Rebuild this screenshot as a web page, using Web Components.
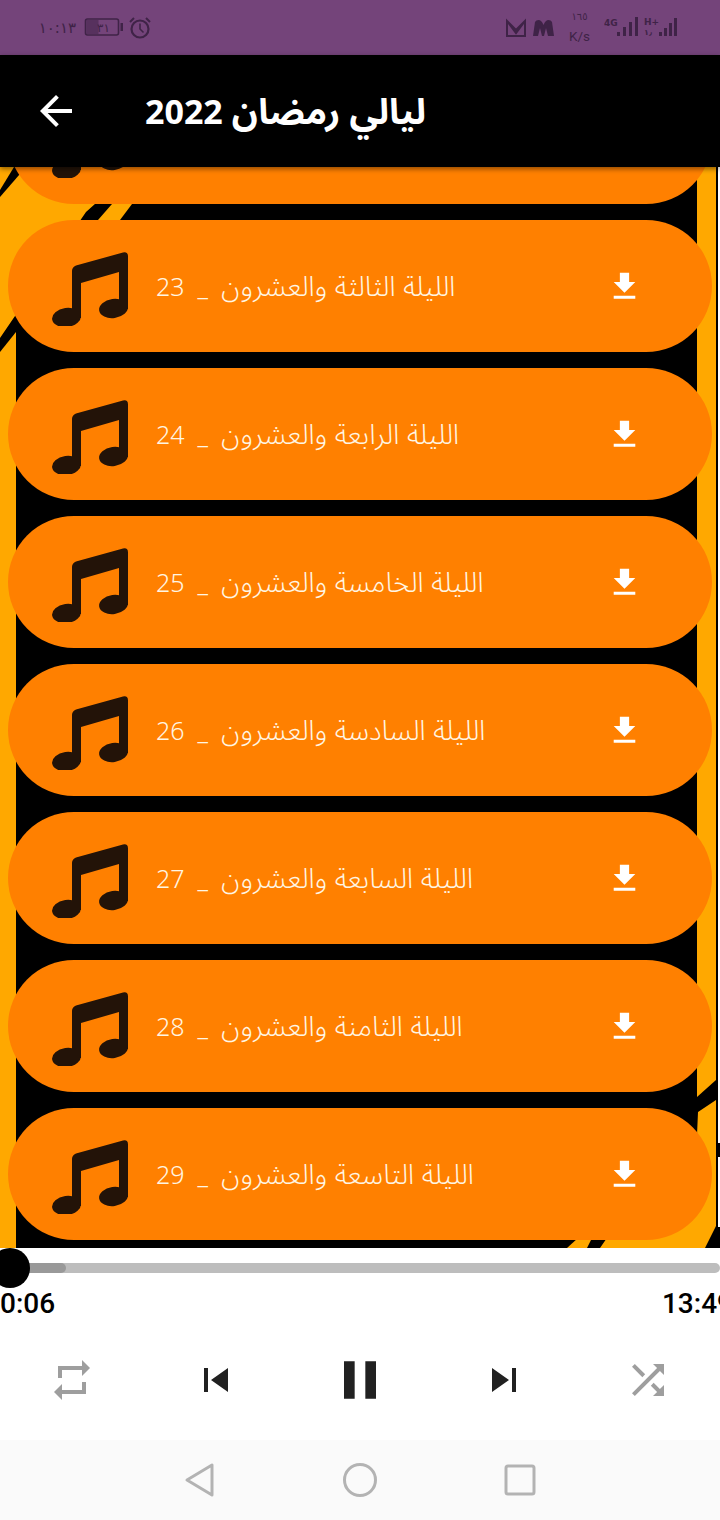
<!DOCTYPE html>
<html lang="ar">
<head>
<meta charset="utf-8">
<style>
html,body{margin:0;padding:0;width:720px;height:1520px;overflow:hidden;background:#fff}
body{display:flex;flex-direction:column;font-family:"Noto Sans Arabic","DejaVu Sans","Noto Sans",sans-serif}
</style>
</head>
<body>
<status-bar></status-bar>
<app-bar><span>ليالي رمضان</span> 2022</app-bar>
<track-list>
  <track-row></track-row>
  <track-row>23 &nbsp;_&nbsp; <span>الليلة الثالثة والعشرون</span></track-row>
  <track-row>24 &nbsp;_&nbsp; <span>الليلة الرابعة والعشرون</span></track-row>
  <track-row>25 &nbsp;_&nbsp; <span>الليلة الخامسة والعشرون</span></track-row>
  <track-row>26 &nbsp;_&nbsp; <span>الليلة السادسة والعشرون</span></track-row>
  <track-row>27 &nbsp;_&nbsp; <span>الليلة السابعة والعشرون</span></track-row>
  <track-row>28 &nbsp;_&nbsp; <span>الليلة الثامنة والعشرون</span></track-row>
  <track-row>29 &nbsp;_&nbsp; <span>الليلة التاسعة والعشرون</span></track-row>
</track-list>
<player-bar></player-bar>
<nav-bar></nav-bar>
<script>
function def(name, css, html){
  customElements.define(name, class extends HTMLElement{
    constructor(){super();const r=this.attachShadow({mode:'open'});r.innerHTML='<style>'+css+'</style>'+html;}
  });
}
def('status-bar',`
:host{display:flex;flex:none;height:55px;background:#74447a;color:#3f2347;align-items:stretch;justify-content:space-between;padding:0 40px;box-sizing:border-box;font-family:"DejaVu Sans",sans-serif}
.l,.r{display:flex;align-items:center}
.t{font-size:15px;width:36px;white-space:nowrap;text-align:center}
.ks{display:flex;flex-direction:column;align-items:center;margin:0 13px 0 11px;line-height:1;width:23px}
.ks b{font-weight:400;font-size:10px;margin-bottom:8px;margin-top:1px}
.ks i{font-style:normal;font-size:13.5px;font-family:"Roboto",sans-serif}
svg{display:block}
svg text{font-family:"DejaVu Sans",sans-serif;fill:#3f2347}
`,`
<div class="l">
<span class="t" dir="rtl">١٠:١٣</span>
<svg width="72" height="26" viewBox="0 0 72 26" style="margin-left:8px">
<rect x="1.500" y="4" width="33" height="16" rx="2" fill="none" stroke="#3f2347" stroke-width="1.600"/>
<rect x="2.500" y="5" width="12" height="14" fill="#3f2347" opacity=".55"/>
<rect x="36.500" y="8" width="2.500" height="8" fill="#3f2347"/>
<text x="13" y="17" font-size="12">٣١</text>
<circle cx="56" cy="14" r="8.500" fill="none" stroke="#3f2347" stroke-width="2.200"/>
<path d="M56 8.500V14l3.500 3.500" fill="none" stroke="#3f2347" stroke-width="1.600"/>
<path d="M46 7l4-4M66 7l-4-4" stroke="#3f2347" stroke-width="2"/>
</svg>
</div>
<div class="r">
<svg width="52" height="20" viewBox="0 0 52 20">
<path d="M2 3v15h18V3l-9 9z M2 3l9 12 9-12" fill="none" stroke="#3f2347" stroke-width="2"/>
<path d="M29 18l2-14q1-2 3.500-2 3 0 5 5 2-5 5-5 2.500 0 3.500 2l2 14h-6l-2-8-2 8h-2l-2-8-2 8z" fill="#3f2347" transform="translate(-1 0)"/>
</svg>
<div class="ks"><b dir="rtl">١٦٥</b><i>K/s</i></div>
<svg width="76" height="26" viewBox="0 0 76 26">
<text x="0" y="11" font-size="9" font-weight="700">4G</text>
<path d="M13 17h3v4h-3zM19 12h3v9h-3zM25 7h3v14h-3zM31 2h3v19h-3z" fill="#3f2347"/>
<text x="40" y="10" font-size="9" font-weight="700">H+</text>
<text x="40" y="20" font-size="8" font-weight="700">١٫</text>
<path d="M55 17h3v4h-3zM60 13h3v8h-3zM65 8h3v13h-3zM70 3h3v18h-3z" fill="#3f2347"/>
</svg>
</div>
`);
def('app-bar',`
:host{display:flex;flex:none;height:112px;background:#000;color:#fff;align-items:center;padding-left:32px;box-sizing:border-box;position:relative;z-index:2;box-shadow:0 2px 5px rgba(0,0,0,.45)}
svg{display:block;width:48px;height:48px;fill:#fff;flex:none}
.t{margin-left:65px;padding-top:3px;font-size:34px;font-weight:700;white-space:nowrap;color:#fff}
::slotted(span){font-size:36px}
`,`
<svg viewBox="0 0 24 24"><path d="M20 11H7.830l5.590-5.590L12 4l-8 8 8 8 1.410-1.410L7.830 13H20v-2z"/></svg>
<span class="t"><slot></slot></span>
`);
def('track-list',`
:host{display:block;flex:none;height:1081px;background:#000;overflow:hidden;position:relative}
.bg{position:absolute;left:0;top:0;width:720px;height:1081px;filter:blur(.7px)}
.list{position:relative;display:flex;flex-direction:column;gap:16px;margin:-95px 8px 0}
`,`
<svg class="bg" viewBox="0 167 720 1081" fill="#ffa800">
<polygon points="0,167 200,167 200,110 86,212 0,338"/>
<polygon points="112,204 132,204 120,220 98,220"/>
<polygon points="0,352 16,332 16,1248 0,1248"/>
<polygon points="697,160 716,160 716,1080 697,1097"/>
<polygon points="698,1112 716,1100 716,1226 705,1248 600,1248 640,1190 697,1135"/>
<polygon points="578,1238 592,1238 587,1248 567,1248"/>
<polygon points="0,190 14,167 26,167 0,197" fill="#000"/>
<rect x="718" y="160" width="4" height="983" fill="#fff"/>
<rect x="718" y="1157" width="4" height="70" fill="#fff"/>
</svg>
<div class="list"><slot></slot></div>
`);
def('track-row',`
:host{display:block}
.r{display:flex;align-items:center;height:132px;border-radius:66px;background:#ff8000;padding:0 69px 0 40px;box-sizing:border-box}
.n{display:block;width:84px;height:80px;flex:none;fill:#231308}
.t{flex:1;margin-left:24px;padding-top:4px;font-size:25px;font-weight:300;color:#fff6e4;white-space:pre;line-height:1.2;min-width:0}
::slotted(span){font-size:28px;font-weight:300}
.d{display:block;width:37px;height:37px;fill:#fff;flex:none}
`,`
<div class="r">
<svg class="n" viewBox="48 246 84 80"><ellipse cx="66.500" cy="317.500" rx="14.500" ry="9.500" transform="rotate(-8 66.500 317.500)"/><ellipse cx="113.500" cy="308.500" rx="14.500" ry="9.500" transform="rotate(-8 113.500 308.500)"/><path d="M72 318V271q0-4 4-5.500L123 252.500q5-1 5 4V309h-9V272L81 283V318z"/></svg>
<span class="t"><slot></slot></span>
<svg class="d" viewBox="0 0 24 24"><path d="M19 9h-4V3H9v6H5l7 7 7-7zM5 18v2h14v-2H5z"/></svg>
</div>
`);
def('player-bar',`
:host{display:block;flex:none;height:192px;background:#fff;font-family:Roboto,sans-serif;overflow:hidden}
.s{position:relative;height:40px}
.track{height:10px;position:relative;top:15px;background:#bdbdbd;border-radius:5px}
.prog{position:absolute;left:0;top:0;bottom:0;width:66px;background:#999;border-radius:5px}
.thumb{position:absolute;left:-10px;top:0;width:40px;height:40px;border-radius:50%;background:#000}
.times{display:flex;justify-content:space-between;font-size:28px;font-weight:500;color:#000;line-height:32px;height:32px;margin-right:-13px}
.c{display:grid;grid-template-columns:repeat(5,1fr);justify-items:center;align-items:center;height:64px;margin-top:28px}
svg{display:block}
`,`
<div class="s"><div class="track"><div class="prog"></div></div><div class="thumb"></div></div>
<div class="times"><span>0:06</span><span>13:49</span></div>
<div class="c">
<svg width="48" height="48" viewBox="0 0 24 24" fill="#9e9e9e"><path d="M7 7h10v3l4-4-4-4v3H5v6h2V7zm10 10H7v-3l-4 4 4 4v-3h12v-6h-2v4z"/></svg>
<svg width="48" height="48" viewBox="0 0 24 24" fill="#212121"><path d="M6 6h2v12H6zm3.500 6l8.500 6V6z"/></svg>
<svg width="64" height="64" viewBox="0 0 24 24" fill="#212121"><path d="M6 19h4V5H6v14zm8-14v14h4V5h-4z"/></svg>
<svg width="48" height="48" viewBox="0 0 24 24" fill="#212121"><path d="M6 18l8.500-6L6 6v12zM16 6v12h2V6h-2z"/></svg>
<svg width="48" height="48" viewBox="0 0 24 24" fill="#9e9e9e"><path d="M10.590 9.170L5.410 4 4 5.410l5.170 5.170 1.420-1.410zM14.500 4l2.040 2.040L4 18.590 5.410 20 17.960 7.460 20 9.500V4h-5.500zm.33 9.410l-1.410 1.410 3.130 3.130L14.500 20H20v-5.500l-2.040 2.040-3.130-3.130z"/></svg>
</div>
`);
def('nav-bar',`
:host{display:grid;flex:none;height:80px;background:#fafafa;grid-template-columns:repeat(3,160px);justify-content:center;justify-items:center;align-items:center}
svg{display:block;fill:none;stroke:#b3b3b3;stroke-width:3;stroke-linejoin:round}
`,`
<svg width="32" height="36" viewBox="0 0 32 36"><path d="M3 18L28 3v30z"/></svg>
<svg width="36" height="36" viewBox="0 0 36 36"><circle cx="18" cy="18" r="15.500"/></svg>
<svg width="32" height="32" viewBox="0 0 32 32"><rect x="2" y="2" width="28" height="28" rx="2"/></svg>
`);
</script>
</body>
</html>
